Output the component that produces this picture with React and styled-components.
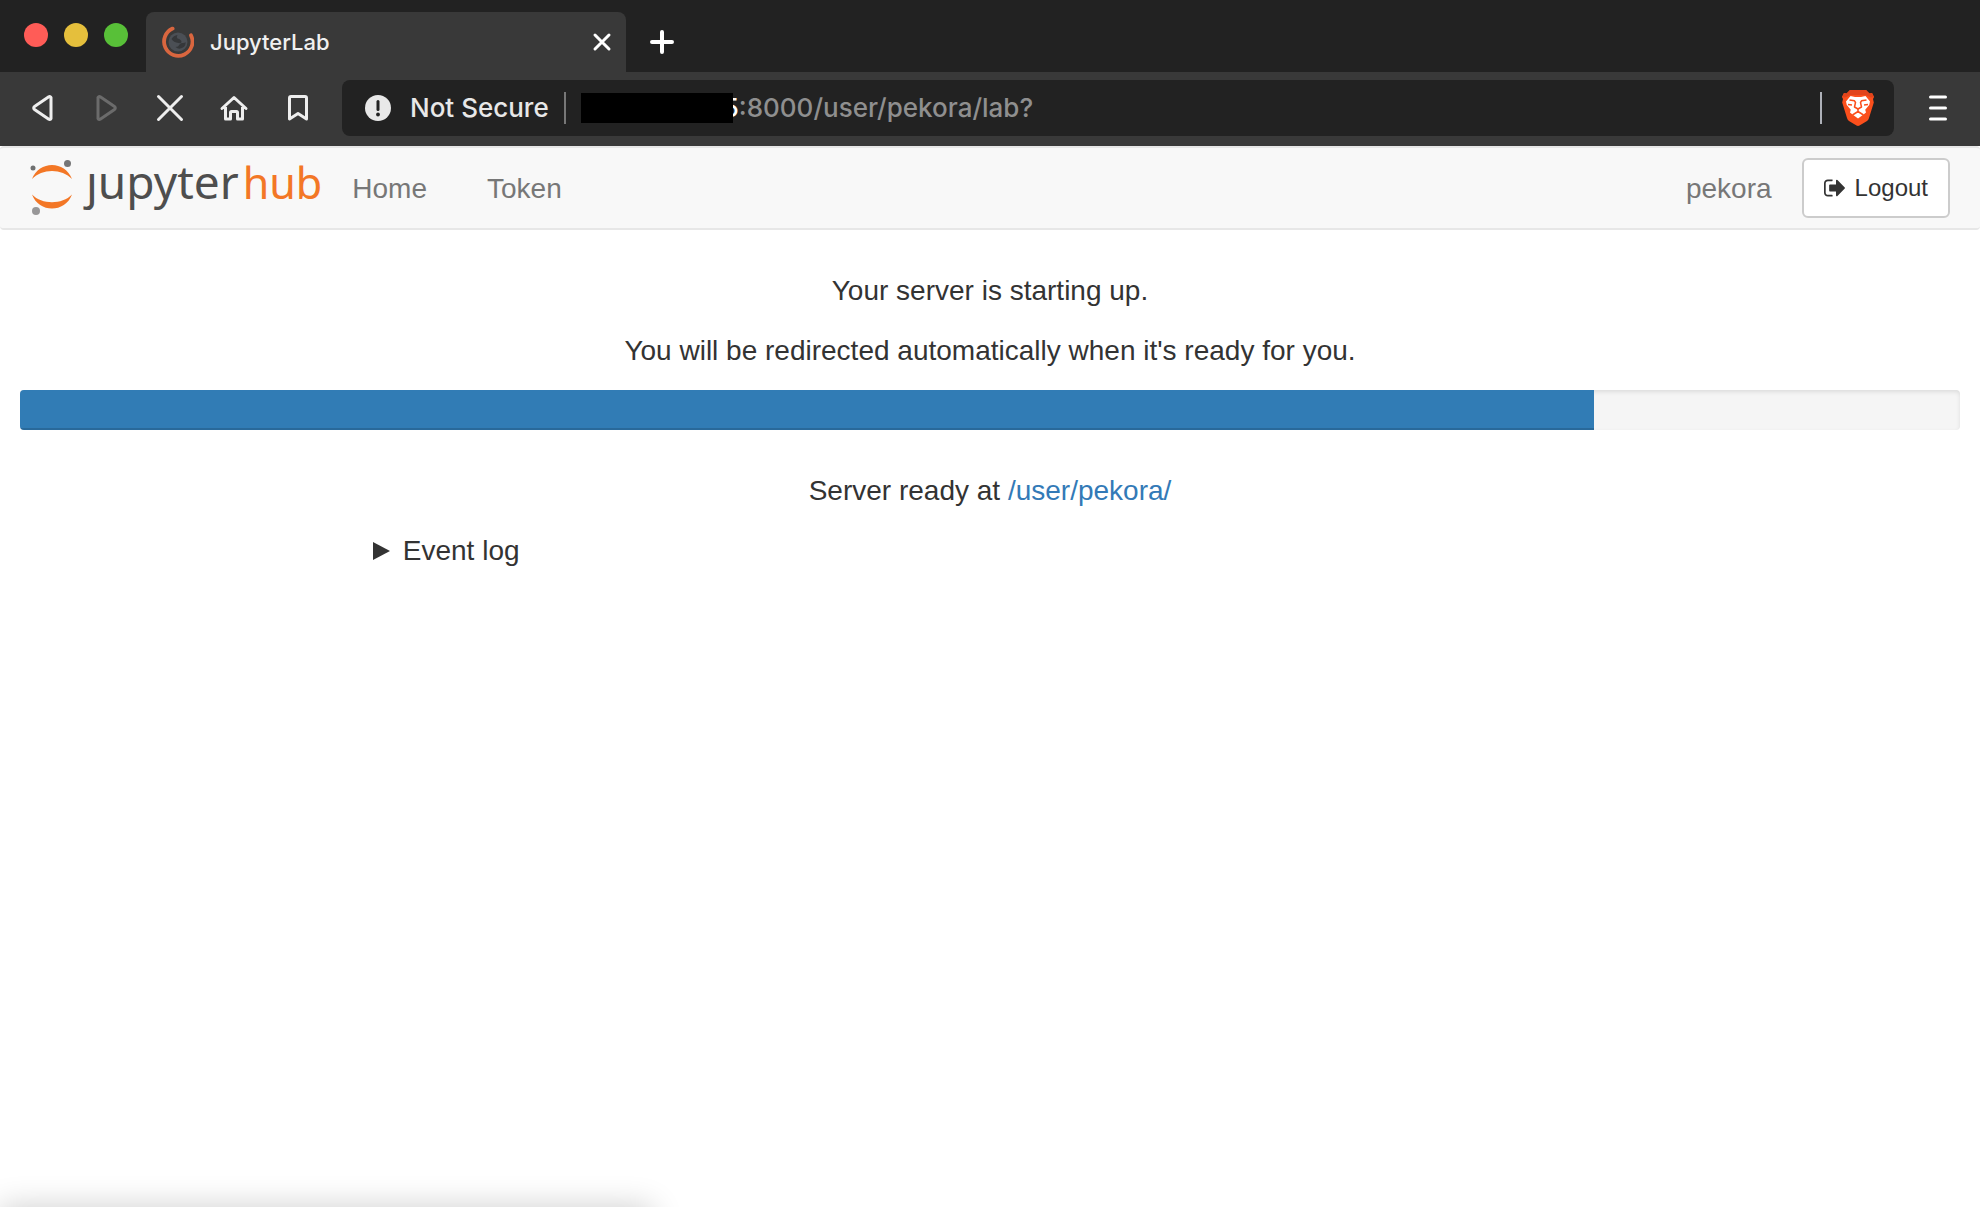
import React, { useState } from 'react'
import styled, { createGlobalStyle } from 'styled-components'

const GlobalStyle = createGlobalStyle`
  * {
    box-sizing: border-box;
  }
  body {
    margin: 0;
    background: #fff;
    color: #333;
    font-family: 'Liberation Sans', Arial, sans-serif;
    font-size: 28px;
    line-height: 40px;
  }
  button {
    padding: 0;
    border: none;
    background: none;
    font: inherit;
    cursor: pointer;
  }
`

const Browser = styled.div`
  display: flex;
  flex-direction: column;
  min-height: 100vh;
`

const Chrome = styled.div`
  font-family: Inter, sans-serif;
  font-weight: 500;
`

const TabStrip = styled.div`
  display: flex;
  align-items: flex-end;
  height: 72px;
  background: #222;
`

const Lights = styled.div`
  display: flex;
  gap: 16px;
  padding: 0 18px 25px 24px;
`

const Light = styled.button`
  width: 24px;
  height: 24px;
  border-radius: 50%;
  && {
    background: ${(props) => props.$color};
  }
`

const Tab = styled.div`
  display: flex;
  align-items: center;
  width: 480px;
  height: 60px;
  padding: 0 12px 0 16px;
  border-radius: 8px 8px 0 0;
  background: #393939;
  color: #f0f0f0;
  font-size: 22px;
`

const TabTitle = styled.span`
  flex: 1;
  margin-left: 16px;
`

const IconButton = styled.button`
  display: flex;
  align-items: center;
  justify-content: center;
  width: ${(props) => props.$width}px;
  height: ${(props) => props.$height || 56}px;
`

const Toolbar = styled.div`
  display: flex;
  align-items: center;
  height: 74px;
  padding: 0 10px 2px;
  background: #393939;
`

const AddressBar = styled.div`
  display: flex;
  align-items: center;
  flex: 1;
  height: 56px;
  margin: 0 12px;
  padding: 0 20px 0 22px;
  border-radius: 8px;
  background: #222;
  font-size: 26px;
`

const NavButtons = styled.div`
  display: flex;
`

const NotSecure = styled.span`
  margin: 0 15px 0 18px;
  color: #e8e8e8;
`

const Divider = styled.span`
  width: 2px;
  height: 32px;
  background: ${(props) => props.$color};
`

const Redacted = styled.span`
  z-index: 1;
  width: 152px;
  height: 30px;
  margin-left: 15px;
  background: #000;
`

/* slides under the redacted block so only its right edge shows */
const HostEnd = styled.span`
  margin-left: -10px;
  color: #fff;
`

const UrlInput = styled.input`
  flex: 1;
  min-width: 0;
  padding: 0;
  border: none;
  outline: none;
  background: none;
  color: #8f8f8f;
  font: inherit;
`

const ShieldButton = styled(IconButton)`
  margin-left: 20px;
`

const Navbar = styled.nav`
  display: flex;
  align-items: center;
  height: 84px;
  padding: 0 30px;
  border: 2px solid #e7e7e7;
  border-width: 2px 0;
  border-radius: 4px;
  background: #f8f8f8;
`

const Brand = styled.a`
  display: flex;
  align-items: center;
  text-decoration: none;
`

const BrandName = styled.span`
  margin: 0 0 12px 12px;
  color: #4e4e4e;
  font-family: 'Noto Sans', 'Open Sans', sans-serif;
  font-size: 46px;
  line-height: 60px;
  b {
    margin-left: 4px;
    color: #f37726;
    font-size: 43px;
    font-weight: 400;
  }
`

const NavLink = styled.a`
  padding: 2px 30px 0;
  color: #777;
  text-decoration: none;
`

const UserName = styled.span`
  margin-left: auto;
  padding: 2px 30px 0;
  color: #777;
`

const Logout = styled.a`
  display: flex;
  align-items: center;
  gap: 7px;
  height: 60px;
  padding: 0 20px;
  border: 2px solid #ccc;
  border-radius: 6px;
  background: #fff;
  color: #333;
  font-size: 24px;
  text-decoration: none;
`

const Main = styled.main`
  flex: 1;
  padding: 40px 20px;
`

const Message = styled.p`
  margin: 0 0 18px;
  line-height: 42px;
  text-align: center;
`

const Track = styled.div`
  height: 40px;
  margin-bottom: 40px;
  overflow: hidden;
  border-radius: 4px;
  background: #f5f5f5;
  box-shadow: inset 0 2px 4px rgba(0, 0, 0, 0.1);
`

const Fill = styled.div`
  height: 100%;
  background: #317cb5;
  box-shadow: inset 0 -2px 0 rgba(0, 0, 0, 0.15);
`

const ServerLink = styled.a`
  color: #337ab7;
  text-decoration: none;
`

const EventLog = styled.details`
  width: 66%;
  margin: 0 auto;
  padding-left: 23px;
`

const Summary = styled.summary`
  display: flex;
  align-items: center;
  gap: 13px;
  line-height: 42px;
  cursor: pointer;
  list-style: none;
`

/* the status bubble rests just under the window, only its shadow is seen */
const StatusShadow = styled.div`
  position: fixed;
  left: 0;
  bottom: -40px;
  width: 652px;
  height: 40px;
  box-shadow: 0 0 32px rgba(0, 0, 0, 0.2);
`

const Stroke = ({ size, width = 3, color = '#eee', children }) => (
  <svg width={size} height={size} viewBox={`0 0 ${size} ${size}`} fill="none" stroke={color}
    strokeWidth={width} strokeLinecap="round" strokeLinejoin="round" aria-hidden="true">
    {children}
  </svg>
)

const Favicon = () => (
  <svg width="32" height="32" viewBox="0 0 32 32" fill="none" aria-hidden="true">
    <path d="M10.6 2.6A14.2 14.2 0 1 0 29 9.3" stroke="#d9663f" strokeWidth="3.8" strokeLinecap="round" />
    <circle cx="16" cy="16" r="9.5" fill="#4b4f55" />
    <path d="M9.500 13q2-3.500 6-4q-1.500 2 0 3.500q4 1 4 3.500q0 1.500-3 1q-5-.5-7-4z" fill="#35373a" />
    <path d="M13.500 21q3 0 4-2.500q1-2 3.500-1.500q2 0 2.500-1q.5 3.500-2.500 5.500q-4 2.500-7.500-.5z" fill="#35373a" />
  </svg>
)

const JupyterMark = () => (
  <svg width="44" height="60" viewBox="30 158 44 60" aria-hidden="true">
    <g fill="#f37726">
      <path d="M32 179C39 160.300 65 160.300 72 179C62 168.300 42 168.300 32 179z" />
      <path d="M32 194.500C39 213.200 65 213.200 72 194.500C62 204.800 42 204.800 32 194.500z" />
    </g>
    <circle cx="33" cy="168" r="2.500" fill="#6f7070" />
    <circle cx="67.500" cy="163.500" r="3.500" fill="#767677" />
    <circle cx="36" cy="211" r="4" fill="#989798" />
  </svg>
)

const Shield = () => (
  <svg width="32" height="36" viewBox="0 0 32 36" aria-hidden="true">
    <path d="M8 0h16l3.500 3.500 2.500-.5 2 4-1 2 .8 3.500L27 28q-.5 2-2 3l-7.500 4.500q-1.500.9-3 0L7 31q-1.500-1-2-3L.2 12.500 1 9 0 7l2-4 2.500.5z" fill="#fb4f1c" />
    <path d="M8 0h16l3.500 3.500 2.500-.5 2 4-3 .5-5.500-2.500h-15L3 7.500 0 7l2-4 2.500.5z" fill="#e2441b" />
    <path d="M8.500 6l4.500 1h6l4.500-1 4.500 5.500-.8 3.500-4 4.800.8 2.700-2.500 2L16 28.500 10.500 24.500l-2.500-2 .8-2.700-4-4.800L4 11.500z" fill="#fff" />
    <g fill="none" stroke="#fb4f1c" strokeWidth="1.500" strokeLinejoin="round">
      <path d="M7.500 10l5 .8 1 1.700-1 4.500 3.500 2 3.500-2-1-4.500 1-1.700 5-.8" />
      <path d="M16 19v2.500l-5.500 3.500M16 21.500l5.500 3.500" />
      <path d="M6 14.500l4 .5M26 14.500l-4 .5" />
    </g>
  </svg>
)

const SignOutIcon = () => (
  <svg width="24" height="24" viewBox="0 0 1792 1792" fill="currentColor" aria-hidden="true">
    <path d="M640 1440q0 4 1 20t.5 26.500-3 23.500-10 19.500-20.500 6.500h-320q-119 0-203.500-84.500t-84.500-203.500v-704q0-119 84.500-203.500t203.500-84.500h320q13 0 22.500 9.500t9.500 22.500q0 4 1 20t.5 26.500-3 23.500-10 19.500-20.500 6.500h-320q-66 0-113 47t-47 113v704q0 66 47 113t113 47h312l11.500 1 11.500 3 8 5.500 7 9 2 13.500zm928-544q0 26-19 45l-544 544q-19 19-45 19t-45-19-19-45v-288h-448q-26 0-45-19t-19-45v-384q0-26 19-45t45-19h448v-288q0-26 19-45t45-19 45 19l544 544q19 19 19 45z" />
  </svg>
)

const BrowserChrome = () => {
  const [url, setUrl] = useState(':8000/user/pekora/lab?')

  return (
    <Chrome>
      <TabStrip>
        <Lights>
          <Light $color="#ff5c57" aria-label="Close window" />
          <Light $color="#e5bf3c" aria-label="Minimize window" />
          <Light $color="#58c038" aria-label="Zoom window" />
        </Lights>
        <Tab>
          <Favicon />
          <TabTitle>JupyterLab</TabTitle>
          <IconButton $width={24} $height={24} aria-label="Close tab">
            <Stroke size={20} color="#fff"><path d="M3 3l14 14M17 3L3 17" /></Stroke>
          </IconButton>
        </Tab>
        <IconButton $width={72} $height={60} aria-label="New tab">
          <Stroke size={24} width={4} color="#fff"><path d="M12 2v20M2 12h20" /></Stroke>
        </IconButton>
      </TabStrip>
      <Toolbar>
        <NavButtons>
          <IconButton $width={64} aria-label="Back">
            <Stroke size={32}><path d="M25 5.500v21a1.500 1.500 0 0 1-2.200.8L8.500 17.500a1.800 1.800 0 0 1 0-3L22.800 4.700A1.500 1.500 0 0 1 25 5.500z" /></Stroke>
          </IconButton>
          <IconButton $width={64} aria-label="Forward" disabled>
            <Stroke size={32} color="#6b6b6b"><path d="M8 5.500v21a1.500 1.500 0 0 0 2.200.8L24.500 17.500a1.800 1.800 0 0 0 0-3L10.200 4.700A1.500 1.500 0 0 0 8 5.500z" /></Stroke>
          </IconButton>
          <IconButton $width={64} aria-label="Stop">
            <Stroke size={32}><path d="M4.500 4.500l23 23M27.500 4.500l-23 23" /></Stroke>
          </IconButton>
          <IconButton $width={64} aria-label="Home page">
            <Stroke size={32}><path d="M4 16.500L16 5.500l12 11M7.500 15v12h5v-6.500q0-1 1-1h5q1 0 1 1V27h5V15" /></Stroke>
          </IconButton>
          <IconButton $width={64} aria-label="Bookmark">
            <Stroke size={32}><path d="M7.500 27V6q0-1.500 1.500-1.500h14q1.500 0 1.500 1.500v21L16 21.500z" /></Stroke>
          </IconButton>
        </NavButtons>
        <AddressBar>
          <svg width="28" height="28" viewBox="0 0 28 28" aria-hidden="true">
            <circle cx="14" cy="14" r="13" fill="#e8e8e8" />
            <path d="M14 7.500v8" stroke="#222" strokeWidth="3" strokeLinecap="round" />
            <circle cx="14" cy="20.500" r="1.900" fill="#222" />
          </svg>
          <NotSecure>Not Secure</NotSecure>
          <Divider $color="#777" />
          <Redacted />
          <HostEnd>5</HostEnd>
          <UrlInput aria-label="Address" value={url} onChange={(e) => setUrl(e.target.value)} />
          <Divider $color="#aeb1b8" />
          <ShieldButton $width={32} aria-label="Brave Shields">
            <Shield />
          </ShieldButton>
        </AddressBar>
        <IconButton $width={64} aria-label="Menu">
          <Stroke size={28} color="#fff"><path d="M6.500 3h15M6.500 14h15M6.500 25h15" /></Stroke>
        </IconButton>
      </Toolbar>
    </Chrome>
  )
}

const App = () => {
  const progress = 81.13

  return (
    <Browser>
      <GlobalStyle />
      <BrowserChrome />
      <Navbar>
        <Brand href="#hub" aria-label="jupyterhub">
          <JupyterMark />
          <BrandName>ȷupyter<b>hub</b></BrandName>
        </Brand>
        <NavLink href="#home">Home</NavLink>
        <NavLink href="#token">Token</NavLink>
        <UserName>pekora</UserName>
        <Logout href="#logout">
          <SignOutIcon />
          Logout
        </Logout>
      </Navbar>
      <Main>
        <Message>Your server is starting up.</Message>
        <Message>You will be redirected automatically when it's ready for you.</Message>
        <Track role="progressbar" aria-label="Server start" aria-valuenow={progress}>
          <Fill style={{ width: `${progress}%` }} />
        </Track>
        <Message>Server ready at <ServerLink href="#server">/user/pekora/</ServerLink></Message>
        <EventLog>
          <Summary>
            <svg width="17" height="18" viewBox="0 0 17 18" fill="#333" aria-hidden="true">
              <path d="M0 0l17 9-17 9z" />
            </svg>
            Event log
          </Summary>
        </EventLog>
      </Main>
      <StatusShadow />
    </Browser>
  )
}

export default App
